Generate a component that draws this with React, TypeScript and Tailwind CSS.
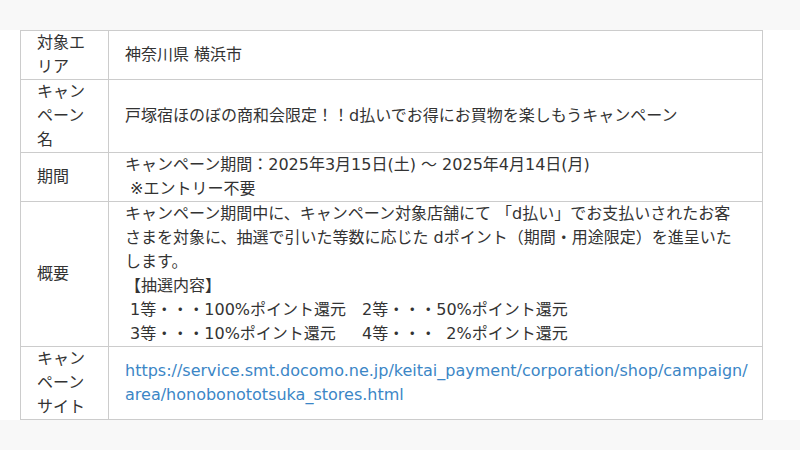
const rows: { label: string; content: React.ReactNode }[] = [
  { label: "対象エリア", content: "神奈川県 横浜市" },
  {
    label: "キャンペーン名",
    content: "戸塚宿ほのぼの商和会限定！！d払いでお得にお買物を楽しもうキャンペーン",
  },
  {
    label: "期間",
    content: (
      <>
        キャンペーン期間：2025年3月15日(土) 〜 2025年4月14日(月)
        <br />
        {" ※エントリー不要"}
      </>
    ),
  },
  {
    label: "概要",
    content: (
      <>
        キャンペーン期間中に、キャンペーン対象店舗にて 「d払い」でお支払いされたお客
        <br />
        さまを対象に、抽選で引いた等数に応じた dポイント（期間・用途限定）を進呈いた
        <br />
        します。
        <br />
        【抽選内容】
        <br />
        {" 1等・・・100%ポイント還元　2等・・・50%ポイント還元"}
        <br />
        {" 3等・・・10%ポイント還元　  4等・・・  2%ポイント還元"}
      </>
    ),
  },
  {
    label: "キャンペーンサイト",
    content: (
      <a href="#" className="text-[#3b86c6]">
        https://service.smt.docomo.ne.jp/keitai_payment/corporation/shop/campaign/
        <br />
        area/honobonototsuka_stores.html
      </a>
    ),
  },
];

export default function App() {
  return (
    <div
      className="h-[450px] w-[800px] bg-[#f8f8f8] pt-[30px] text-[16px] leading-[24px] text-[#333]"
      style={{ fontFamily: '"DejaVu Sans", "Noto Sans CJK JP", sans-serif' }}
    >
      <div className="bg-white pl-[20px]">
        <table className="w-[743px] table-fixed border-collapse">
          <tbody>
            {rows.map((row) => (
              <tr key={row.label}>
                <td className="w-[88px] border border-[#cccccc] px-[16px] py-0 align-middle break-all">
                  {row.label}
                </td>
                <td className="whitespace-pre-wrap border border-[#cccccc] px-[16px] py-0 align-middle">
                  {row.content}
                </td>
              </tr>
            ))}
          </tbody>
        </table>
      </div>
    </div>
  );
}
